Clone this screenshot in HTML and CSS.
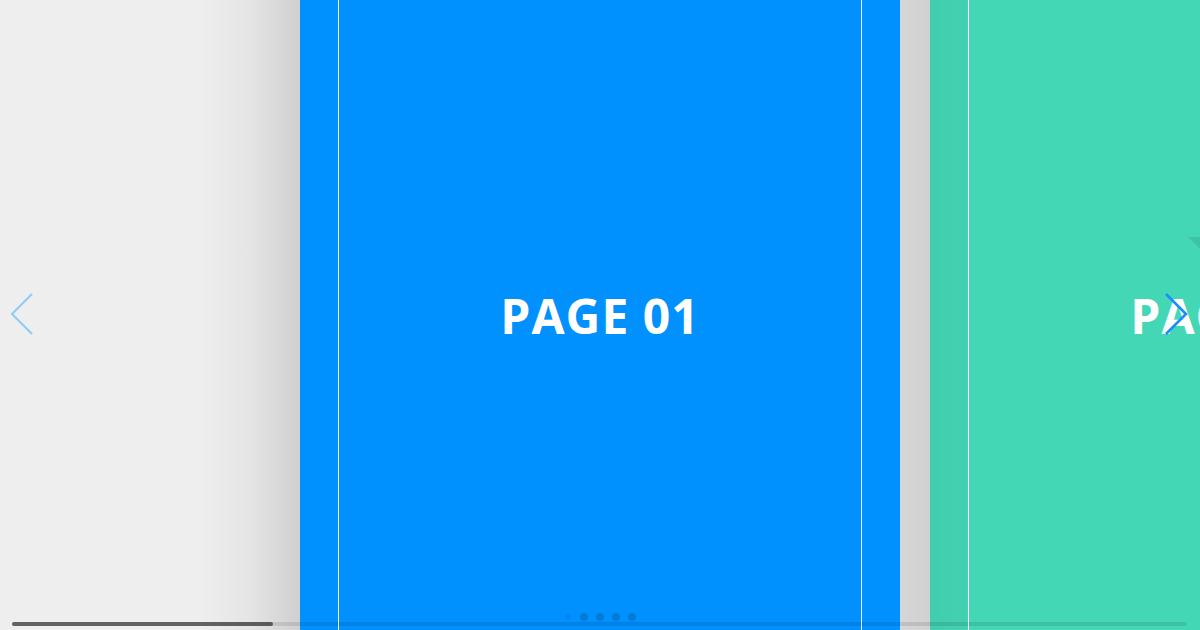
FILE: index.html
```html
<!DOCTYPE html>
<html>
<head>
<meta charset="utf-8">
<link rel="stylesheet" href="styles.css">
</head>
<body>
<div class="swiper">
  <div class="track">
    <div class="slide slide-blue">
      <div class="frame"><span class="title">PAGE 01</span></div>
    </div>
    <div class="slide slide-green">
      <div class="frame"><span class="title">PAGE 02</span></div>
      <span class="tri"></span>
    </div>
  </div>
  <button class="nav nav-prev" aria-label="Previous">
    <svg width="26" height="44" viewBox="0 0 26 44"><polyline points="22,2 2,22 22,42" fill="none" stroke="currentColor" stroke-width="2.2"/></svg>
  </button>
  <button class="nav nav-next" aria-label="Next">
    <svg width="26" height="44" viewBox="0 0 26 44"><polyline points="4,2 24,22 4,42" fill="none" stroke="currentColor" stroke-width="2.6"/></svg>
  </button>
  <div class="pagination">
    <span class="dot dot-active"></span>
    <span class="dot"></span>
    <span class="dot"></span>
    <span class="dot"></span>
    <span class="dot"></span>
  </div>
  <div class="scrollbar"><div class="thumb"></div></div>
</div>
</body>
</html>
```
FILE: styles.css
```css
html, body {
  margin: 0;
  padding: 0;
  width: 1200px;
  height: 630px;
  overflow: hidden;
  background: #eeeeee;
  font-family: "Open Sans", "Liberation Sans", sans-serif;
}
.swiper {
  position: relative;
  width: 1200px;
  height: 630px;
  overflow: hidden;
  background: #eeeeee;
}
.track {
  display: flex;
  gap: 30px;
  padding-left: 300px;
  height: 630px;
  background: linear-gradient(to right, rgba(0,0,0,0) 200px, rgba(0,0,0,0.04) 250px, rgba(0,0,0,0.13) 300px, rgba(0,0,0,0.1) 900px, rgba(0,0,0,0.12) 930px, rgba(0,0,0,0) 930px);
}
.slide {
  position: relative;
  flex: 0 0 600px;
  height: 630px;
  display: flex;
  padding: 0 38px 0 38px;
  box-sizing: border-box;
}
.slide-blue { background: #0091ff; }
.slide-green {
  background: linear-gradient(to right, rgba(0,0,0,0.045), rgba(0,0,0,0.03) 36px, rgba(0,0,0,0) 40px, rgba(0,0,0,0) 100%), #44d7b6;
  background-color: #44d7b6;
}
.frame {
  flex: 1;
  border-left: 1px solid #ffffff;
  border-right: 1px solid #ffffff;
  display: flex;
  align-items: center;
  justify-content: center;
}
.title {
  color: #ffffff;
  font-weight: 700;
  font-size: 48px;
  letter-spacing: 1px;
  margin-top: 0;
}
.tri {
  position: absolute;
  left: 258px;
  top: 237px;
  width: 13px;
  height: 13px;
  background: rgba(0,0,0,0.09);
  clip-path: polygon(0 0, 100% 0, 100% 100%);
}
.nav {
  position: absolute;
  top: 292px;
  width: 26px;
  height: 44px;
  padding: 0;
  margin: 0;
  border: 0;
  background: none;
  display: flex;
}
.nav-prev { left: 10px; color: #8fcdf8; }
.nav-next { left: 1162px; color: #1a8cff; }
.pagination {
  position: absolute;
  left: 564px;
  top: 613px;
  display: flex;
  gap: 8px;
}
.dot {
  width: 8px;
  height: 8px;
  border-radius: 50%;
  background: #077ad9;
}
.dot-active {
  background: rgba(0,60,140,0.15);
  transform: scale(0.7);
}
.scrollbar {
  position: absolute;
  left: 12px;
  top: 622px;
  width: 1175px;
  height: 4px;
  border-radius: 2px;
  background: rgba(0,0,0,0.1);
}
.thumb {
  width: 261px;
  height: 4px;
  border-radius: 2px;
  background: rgba(0,0,0,0.55);
}
```
